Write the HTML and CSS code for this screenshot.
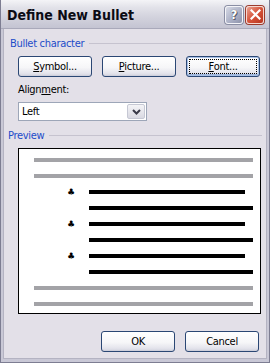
FILE: index.html
```html
<!DOCTYPE html>
<html>
<head>
<meta charset="utf-8">
<link rel="stylesheet" href="styles.css">
</head>
<body>
<div class="window">
  <div class="titlebar">
    <span class="title">Define New Bullet</span>
    <div class="tb-buttons">
      <span class="tb-btn help">?</span>
      <span class="tb-btn close">
        <svg width="11" height="11" viewBox="0 0 11 11"><path d="M1.5 1.5 L9.5 9.5 M9.5 1.5 L1.5 9.5" stroke="#fff" stroke-width="2.2" stroke-linecap="square"/></svg>
      </span>
    </div>
  </div>
  <div class="body">
    <div class="legend legend-bullet">Bullet character</div>
    <div class="btn-row">
      <span class="btn"><u>S</u>ymbol...</span>
      <span class="btn"><u>P</u>icture...</span>
      <span class="btn default"><span class="focus"><u>F</u>ont...</span></span>
    </div>
    <div class="label">Align<u>m</u>ent:</div>
    <div class="select">
      <span class="select-text">Left</span>
      <span class="select-arrow">
        <svg width="9" height="6" viewBox="0 0 9 6"><path d="M1 1 L4.5 4.5 L8 1" fill="none" stroke="#3a3a48" stroke-width="2"/></svg>
      </span>
    </div>
    <div class="legend legend-preview">Preview</div>
    <div class="preview">
      <div class="row"><span class="line gray"></span></div>
      <div class="row"><span class="line gray"></span></div>
      <div class="row indent"><span class="bullet">♣</span><span class="line short"></span></div>
      <div class="row indent"><span class="bullet"></span><span class="line long"></span></div>
      <div class="row indent"><span class="bullet">♣</span><span class="line short"></span></div>
      <div class="row indent"><span class="bullet"></span><span class="line long"></span></div>
      <div class="row indent"><span class="bullet">♣</span><span class="line short"></span></div>
      <div class="row indent"><span class="bullet"></span><span class="line long"></span></div>
      <div class="row"><span class="line gray"></span></div>
      <div class="row"><span class="line gray"></span></div>
    </div>
    <div class="btn-row bottom">
      <span class="btn">OK</span>
      <span class="btn">Cancel</span>
    </div>
  </div>
</div>
</body>
</html>
```

FILE: styles.css
```css
html, body {
  margin: 0;
  padding: 0;
}
body {
  width: 270px;
  height: 363px;
  overflow: hidden;
  background: #ffffff;
  font-family: "DejaVu Sans Condensed", "Liberation Sans", sans-serif;
  font-size: 11px;
  letter-spacing: -0.3px;
  color: #000;
}
.window {
  box-sizing: border-box;
  width: 270px;
  height: 363px;
  display: flex;
  flex-direction: column;
  background: #c9c8d6;
  border: 1px solid #7d7d92;
  border-top: none;
}
.titlebar {
  height: 28px;
  flex: none;
  display: flex;
  align-items: center;
  justify-content: space-between;
  padding: 0 5px 0 6px;
  background: linear-gradient(#f4f4f7 0%, #e3e3ea 25%, #d5d5df 55%, #c4c4d2 100%);
  border-bottom: 1px solid #a9a9ba;
}
.title {
  font-family: "DejaVu Sans Condensed", "Liberation Sans", sans-serif;
  font-weight: bold;
  font-size: 14px;
  letter-spacing: 0;
  color: #0b0b14;
  margin-top: 1px;
}
.tb-buttons {
  display: flex;
  gap: 3px;
  margin-top: 1px;
}
.tb-btn {
  box-sizing: border-box;
  width: 18px;
  height: 18px;
  border-radius: 3px;
  display: flex;
  align-items: center;
  justify-content: center;
}
.help {
  background: linear-gradient(135deg, #d5d8e4 0%, #a9aec4 60%, #8e93aa 100%);
  border: 1px solid #f4f4f8;
  box-shadow: 0 0 0 1px #8a8ea4;
  color: #ffffff;
  font-weight: bold;
  font-size: 13px;
  letter-spacing: 0;
  text-shadow: 0 0 1px #444, 1px 1px 0 #5a5e74;
}
.close {
  background: linear-gradient(135deg, #e9a08f 0%, #d6533a 50%, #b8341f 100%);
  border: 1px solid #f6d8d0;
  box-shadow: 0 0 0 1px #9b3a2c;
}
.body {
  flex: 1;
  margin: 0 2px 3px;
  background: #e3e0e8;
  border: 1px solid #b4b3c2;
  border-top: none;
  padding: 8px 4px 0 0;
  display: flex;
  flex-direction: column;
}
.legend {
  display: flex;
  align-items: center;
  gap: 5px;
  height: 13px;
  line-height: 13px;
  color: #1d4cc8;
  white-space: nowrap;
}
.legend::after {
  content: "";
  flex: 1;
  height: 1px;
  background: #c6c3cf;
}
.legend-bullet {
  margin-left: 6px;
}
.legend-preview {
  margin-left: 4px;
  margin-top: 8px;
}
.btn-row {
  display: flex;
  gap: 10px;
  margin-top: 6px;
  margin-left: 14px;
}
.btn {
  box-sizing: border-box;
  width: 74px;
  height: 21px;
  border: 1px solid #2b4774;
  border-radius: 3px;
  background: linear-gradient(#ffffff 0%, #f6f6f8 55%, #e4e4ec 85%, #d2d3de 100%);
  box-shadow: inset 0 -1px 0 #cfd0dc;
  display: flex;
  align-items: center;
  justify-content: center;
  line-height: 13px;
  color: #000;
}
.btn u {
  text-decoration: underline;
  text-underline-offset: 1px;
}
.btn.default {
  box-shadow: inset 0 0 0 1px #a8c0e6, inset 0 -2px 0 #9fb6dc;
  padding: 2px;
}
.btn.default .focus {
  flex: 1;
  align-self: stretch;
  display: flex;
  align-items: center;
  justify-content: center;
  border: 1px dotted #000;
}
.label {
  margin-top: 6px;
  margin-left: 14px;
  height: 13px;
  line-height: 13px;
}
.select {
  box-sizing: border-box;
  margin-top: 6px;
  margin-left: 14px;
  width: 129px;
  height: 19px;
  background: #fff;
  border: 1px solid #9da6b8;
  display: flex;
  align-items: stretch;
}
.select-text {
  flex: 1;
  padding-left: 3px;
  line-height: 17px;
}
.select-arrow {
  width: 16px;
  margin: 1px;
  border: 1px solid #c6c8d4;
  border-radius: 2px;
  background: linear-gradient(#f4f4f7, #d9d9e2);
  display: flex;
  align-items: center;
  justify-content: center;
}
.preview {
  box-sizing: border-box;
  margin-top: 6px;
  margin-left: 14px;
  width: 243px;
  height: 166px;
  background: #fff;
  border: 1px solid #000;
  padding-top: 3px;
  display: flex;
  flex-direction: column;
}
.row {
  height: 16px;
  flex: none;
  display: flex;
  align-items: center;
  padding-left: 15px;
}
.row.indent {
  padding-left: 48px;
}
.line {
  height: 4px;
  display: block;
}
.line.gray {
  width: 219px;
  background: #a3a3a7;
}
.line.short {
  width: 156px;
  background: #000;
}
.line.long {
  width: 164px;
  background: #000;
}
.bullet {
  width: 22px;
  flex: none;
  font-family: "DejaVu Sans", sans-serif;
  font-size: 9px;
  line-height: 9px;
  color: #000;
}
.btn-row.bottom {
  justify-content: flex-end;
  margin-top: 17px;
  margin-right: 3px;
}
```
